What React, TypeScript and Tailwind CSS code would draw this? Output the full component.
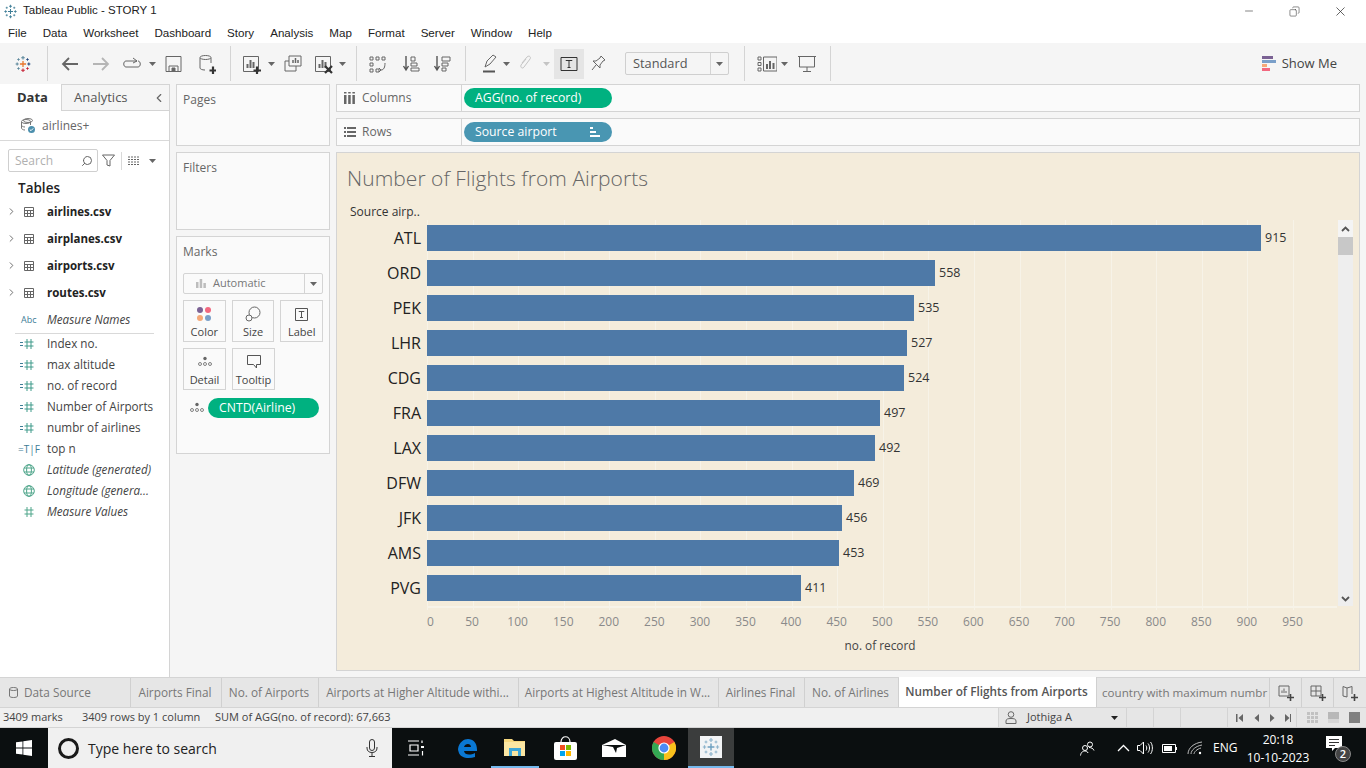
import React from 'react';
import { ChevronRight, Minus, X, Copy, Search } from 'lucide-react';

const bars = [
  ['ATL', 915], ['ORD', 558], ['PEK', 535], ['LHR', 527], ['CDG', 524], ['FRA', 497],
  ['LAX', 492], ['DFW', 469], ['JFK', 456], ['AMS', 453], ['PVG', 411],
] as const;

const ticks = Array.from({ length: 20 }, (_, i) => i * 50);

const tables = ['airlines.csv', 'airplanes.csv', 'airports.csv', 'routes.csv'];

const menus = ['File', 'Data', 'Worksheet', 'Dashboard', 'Story', 'Analysis', 'Map', 'Format', 'Server', 'Window', 'Help'];

const measures = [
  { kind: 'hash', label: 'Index no.' },
  { kind: 'hash', label: 'max altitude' },
  { kind: 'hash', label: 'no. of record' },
  { kind: 'hash', label: 'Number of Airports' },
  { kind: 'hash', label: 'numbr of airlines' },
  { kind: 'tf', label: 'top n' },
  { kind: 'globe', label: 'Latitude (generated)', italic: true },
  { kind: 'globe', label: 'Longitude (genera...', italic: true },
  { kind: 'plain', label: 'Measure Values', italic: true },
];

const tabs = [
  { label: 'Airports Final', w: 'w-[91px]' },
  { label: 'No. of Airports', w: 'w-[97px]' },
  { label: 'Airports at Higher Altitude withi...', w: 'w-[200px]' },
  { label: 'Airports at Highest Altitude in W...', w: 'w-[200px]' },
  { label: 'Airlines Final', w: 'w-[86px]' },
  { label: 'No. of Airlines', w: 'w-[94px]' },
];

// the Tableau mark: crosses of different sizes
const Cross = ({ x, y, r, c, w = 1.2 }: { x: number; y: number; r: number; c: string; w?: number }) => (
  <path d={`M${x - r} ${y}H${x + r}M${x} ${y - r}V${y + r}`} stroke={c} strokeWidth={w} fill="none" />
);

const TableauMark = ({ size, colors }: { size: number; colors: string[] }) => (
  <svg width={size} height={size} viewBox="0 0 20 20" className="shrink-0">
    <Cross x={10} y={10} r={3.4} c={colors[0]} w={1.4} />
    <Cross x={10} y={3} r={2} c={colors[1]} />
    <Cross x={10} y={17} r={2} c={colors[2]} />
    <Cross x={3.5} y={10} r={1.7} c={colors[3]} />
    <Cross x={16.5} y={10} r={1.7} c={colors[4]} />
    <Cross x={5} y={5} r={1.4} c={colors[1]} w={1} />
    <Cross x={15} y={5} r={1.4} c={colors[4]} w={1} />
    <Cross x={5} y={15} r={1.4} c={colors[3]} w={1} />
    <Cross x={15} y={15} r={1.4} c={colors[2]} w={1} />
  </svg>
);

const Caret = ({ className = '', color = '#666' }: { className?: string; color?: string }) => (
  <svg width="7" height="4" viewBox="0 0 7 4" className={`shrink-0 ${className}`}>
    <path d="M0 0H7L3.5 4Z" fill={color} />
  </svg>
);

const Sep = ({ className = '' }: { className?: string }) => <div className={`w-px h-[35px] bg-[#d4d4d4] shrink-0 ${className}`} />;

const Ico = ({ w = 20, h = 20, className = '', children }: { w?: number; h?: number; className?: string; children: React.ReactNode }) => (
  <svg width={w} height={h} viewBox={`0 0 ${w} ${h}`} fill="none" stroke="#666" strokeWidth="1" className={`shrink-0 ${className}`}>
    {children}
  </svg>
);

const BarsGlyph = () => <path d="M5.5 14V10M8.5 14V6M11.5 14V8" strokeWidth="2" />;
const PlusGlyph = () => <path d="M15 12.5V20M11.5 16.5H19" stroke="#333" strokeWidth="2.2" />;

const Toolbar = () => (
  <div className="h-[41px] bg-[#f5f5f5] flex items-center shrink-0">
    <div className="ml-[14px]"><TableauMark size={18} colors={['#e8762c', '#5b879b', '#c72035', '#5b879b', '#1f457e']} /></div>
    <Sep className="ml-[15px]" />
    <Ico w={18} className="ml-[13px]"><path d="M17 10H2M8 4L2 10L8 16" stroke="#666" strokeWidth="1.8" /></Ico>
    <Ico w={18} className="ml-[13px]"><path d="M1 10H16M10 4L16 10L10 16" stroke="#b5b5b5" strokeWidth="1.8" /></Ico>
    <Ico w={20} className="ml-[12px]"><path d="M15 7H4C1 7 1 13 4 13H16C19 13 19 7 16 7M11 4L15 7L11 9" /></Ico>
    <Caret className="ml-[7px]" />
    <Ico w={17} className="ml-[9px]"><path d="M1 2.5H16V17.5H1Z" /><path d="M4 17V12H13V17" /><path d="M7 14H10V17H7Z" fill="#666" /></Ico>
    <Ico w={18} className="ml-[16px]"><ellipse cx="7.5" cy="3.5" rx="5.5" ry="2" /><path d="M2 4V14C2 15 4 16 7 16M13 4V9" /><PlusGlyph /></Ico>
    <Sep className="ml-[14px]" />
    <Ico w={20} className="ml-[11px]"><path d="M1.5 2.5H16.5V17.5H1.5Z" /><BarsGlyph /><PlusGlyph /></Ico>
    <Caret className="ml-[6px]" />
    <Ico w={18} className="ml-[9px]"><path d="M5 2H17V12H5Z" /><path d="M1 7H5M1 7V17H12V12" /><path d="M9 9V6M11.5 9V4M14 9V6" strokeWidth="1.5" /></Ico>
    <Ico w={20} className="ml-[12px]"><path d="M1.5 2.5H16.5V17.5H1.5Z" /><BarsGlyph /><path d="M11 12L18 19M18 12L11 19" stroke="#333" strokeWidth="2.2" /></Ico>
    <Caret className="ml-[5px]" />
    <Sep className="ml-[10px]" />
    <Ico w={18} className="ml-[12px]"><path d="M1 3H4V6H1ZM7 3H10V6H7ZM13 3H16V6H13ZM1 9H4V12H1ZM1 15H4V18H1ZM7 15H10V18H7Z" /><path d="M16 9C16 13 15 16 12 16M10 14L12 16L10 18" /></Ico>
    <Ico w={18} className="ml-[15px]"><path d="M4 2V15M1.5 12L4 16L6.5 12" stroke="#555" strokeWidth="1.4" /><path d="M9 3H13V7H9ZM9 9H15V12H9ZM9 14H17V17H9Z" /></Ico>
    <Ico w={18} className="ml-[13px]"><path d="M4 2V15M1.5 12L4 16L6.5 12" stroke="#555" strokeWidth="1.4" /><path d="M9 3H17V7H9ZM9 9H15V12H9ZM9 14H13V17H9Z" /></Ico>
    <Sep className="ml-[14px]" />
    <Ico w={16} className="ml-[16px]"><path d="M3 13L5 7L11 1L14 3L8 10L3 13Z" fill="none" /><path d="M1 17.5H13" stroke="#555" strokeWidth="2" /></Ico>
    <Caret className="ml-[5px]" />
    <Ico w={14} className="ml-[8px]"><path d="M4 9L9 3C11 1 13.5 3 12 5L6 13C5 15 2 14 3 11L8 5" stroke="#c4c4c4" /></Ico>
    <Caret className="ml-[11px]" color="#c4c4c4" />
    <div className="ml-[4px] w-[30px] h-[30px] bg-[#e5e5e5] flex items-center justify-center shrink-0">
      <Ico w={18} h={16}><path d="M1 1.5H17V14.5H1Z" stroke="#333" /><path d="M6 5V4.5H12V5M9 4.5V11.5M7.5 11.5H10.5" stroke="#333" /></Ico>
    </div>
    <Ico w={15} className="ml-[7px]"><path d="M10 2L14 6L12 7L9 11L9 14L2 7L5 7L9 4Z" /><path d="M5 11L1 16" /></Ico>
    <div className="ml-[19px] w-[104px] h-[23px] border border-[#cfcfcf] rounded-[2px] flex items-center shrink-0">
      <span className="flex-1 pl-[7px] text-[12.8px] text-[#555] leading-none">Standard</span>
      <div className="w-[18px] h-full border-l border-[#d4d4d4] flex items-center justify-center"><Caret /></div>
    </div>
    <Sep className="ml-[15px]" />
    <Ico w={20} className="ml-[12px]"><path d="M1 3H4V6H1ZM1 8.5H4V11.5H1ZM1 14H4V17H1ZM6.5 3H20V17H6.5Z" /><path d="M10 15V10M13 15V7M16.5 15V9" strokeWidth="2" /></Ico>
    <Caret className="ml-[4px]" />
    <Ico w={18} className="ml-[10px]"><path d="M0 2.5H18M1.5 3V13H16.5V3M9 13V17M5 17.5H13" /></Ico>
    <Sep className="ml-[14px]" />
    <div className="ml-auto mr-[29px] flex items-center">
      <div className="flex flex-col gap-[1px] w-[14px] mr-[6px]">
        <div className="h-[3px] w-[11px] bg-[#7b6294]" />
        <div className="h-[3px] w-[14px] bg-[#7a9fc9]" />
        <div className="h-[3px] w-[5px] bg-[#f5a878]" />
        <div className="h-[3px] w-[8px] bg-[#f2687f]" />
      </div>
      <span className="text-[13px] text-[#444]">Show Me</span>
    </div>
  </div>
);

const HashIcon = ({ kind }: { kind: string }) => {
  if (kind === 'tf') return <span className="w-[18px] text-[10px] leading-none text-[#3d7d96] -ml-[1px]">=T|F</span>;
  if (kind === 'globe') {
    return (
      <svg width="12" height="12" viewBox="0 0 12 12" fill="none" stroke="#4ea58a" strokeWidth="1" className="ml-[4px] mr-[2px]">
        <circle cx="6" cy="6" r="5.3" />
        <ellipse cx="6" cy="6" rx="2.4" ry="5.3" />
        <path d="M1 4H11M1 8H11" />
      </svg>
    );
  }
  const c = kind === 'plain' ? '#4ea58a' : '#3e9a8a';
  return (
    <svg width="18" height="12" viewBox="0 0 18 12" fill="none" strokeWidth="1" className="shrink-0">
      {kind === 'hash' && <path d="M1 4.5H4M1 7.5H4" stroke="#3d7d96" />}
      <path d="M8 1V11M12 1V11M5.5 4H14.5M5.5 8H14.5" stroke={c} />
    </svg>
  );
};

const DataPane = () => (
  <div className="w-[170px] bg-white border-r border-[#d4d4d4] flex flex-col shrink-0">
    <div className="h-[27px] flex shrink-0">
      <div className="w-[61px] h-full flex items-center justify-center pl-[4px] text-[13px] font-bold text-[#333]">Data</div>
      <div className="flex-1 bg-[#f5f5f5] border-l border-b border-t border-[#d4d4d4] flex items-center relative">
        <span className="ml-[12px] text-[13px] text-[#555]">Analytics</span>
        <ChevronRight size={14} className="absolute right-[3px] rotate-180 text-[#666]" />
      </div>
    </div>
    <div className="h-[30px] flex items-center border-b border-[#d9d9d9] shrink-0">
      <svg width="16" height="16" viewBox="0 0 16 16" fill="none" stroke="#777" strokeWidth="1" className="ml-[20px]">
        <ellipse cx="6" cy="3.5" rx="4.5" ry="2" />
        <ellipse cx="8" cy="2.5" rx="4.5" ry="2" />
        <path d="M1.5 4V10C1.5 11 3 12 5 12M1.5 7C1.5 8 3 9 5 9M10.5 4V7" />
        <circle cx="11.5" cy="11.5" r="3.5" fill="#4b8fad" stroke="none" />
        <path d="M9.8 11.5L11 12.7L13.2 10.4" stroke="#fff" />
      </svg>
      <span className="ml-[6px] text-[12px] text-[#666]">airlines+</span>
    </div>
    <div className="flex items-center mt-[8px] ml-[8px] shrink-0">
      <div className="w-[90px] h-[23px] border border-[#cfcfcf] rounded-[2px] flex items-center justify-between pl-[6px] pr-[4px]">
        <span className="text-[12px] text-[#b0b0b0]">Search</span>
        <Search size={12} className="text-[#666] -scale-x-100" />
      </div>
      <svg width="13" height="13" viewBox="0 0 13 13" fill="none" stroke="#666" className="ml-[4px]"><path d="M0.5 1H12.5L8 6.5V12L5 11V6.5Z" /></svg>
      <div className="w-px h-[18px] bg-[#d9d9d9] ml-[6px]" />
      <svg width="12" height="10" viewBox="0 0 12 10" stroke="#666" strokeDasharray="2 1" className="ml-[6px]"><path d="M0 1H12M0 3.5H12M0 6H12M0 8.5H12" /></svg>
      <Caret className="ml-[9px]" />
    </div>
    <div className="mt-[6px] ml-[18px] text-[13.5px] font-semibold text-[#222] leading-[20px]">Tables</div>
    <div className="flex flex-col">
      {tables.map((t) => (
        <div key={t} className="h-[27px] flex items-center">
          <ChevronRight size={11} strokeWidth={2} className="ml-[6px] text-[#666]" />
          <svg width="10" height="10" viewBox="0 0 10 10" fill="none" stroke="#666" className="ml-[7px]"><path d="M0.5 0.5H9.5V9.5H0.5ZM0.5 3.5H9.5M0.5 6.5H9.5M3.5 3.5V9.5M6.5 3.5V9.5" /></svg>
          <span className="ml-[13px] text-[11.5px] font-bold text-[#222]">{t}</span>
        </div>
      ))}
    </div>
    <div className="h-[28px] flex items-center mx-[15px] border-b border-[#d9d9d9]">
      <span className="w-[32px] pl-[6px] text-[9px] text-[#3d7d96]">Abc</span>
      <span className="italic text-[11.7px] text-[#444]">Measure Names</span>
    </div>
    <div className="flex flex-col -mt-[1px]">
      {measures.map((m) => (
        <div key={m.label} className="h-[21px] flex items-center pl-[19px]">
          <div className="w-[28px] flex items-center"><HashIcon kind={m.kind} /></div>
          <span className={`text-[11.7px] text-[#444] whitespace-nowrap ${m.italic ? 'italic' : ''}`}>{m.label}</span>
        </div>
      ))}
    </div>
  </div>
);

const MarkCard = ({ label, children }: { label: string; children: React.ReactNode }) => (
  <div className="w-[43px] h-[42px] border border-[#d4d4d4] flex flex-col items-center justify-end pb-[2px]">
    <div className="h-[20px] flex items-center">{children}</div>
    <span className="text-[11px] leading-[15px] text-[#444]">{label}</span>
  </div>
);

const DetailDots = () => (
  <svg width="14" height="12" viewBox="0 0 14 12" fill="none" stroke="#666" strokeWidth="0.8">
    <circle cx="7" cy="2.5" r="1.7" fill="#666" stroke="none" />
    <circle cx="2" cy="8" r="1.5" />
    <circle cx="7" cy="8" r="1.5" />
    <circle cx="12" cy="8" r="1.5" />
  </svg>
);

const Panel = ({ title, className, children }: { title: string; className: string; children?: React.ReactNode }) => (
  <div className={`border border-[#d4d4d4] bg-[#fafafa] px-[6px] shrink-0 ${className}`}>
    <div className="text-[12px] text-[#666] mt-[7px] leading-[16px]">{title}</div>
    {children}
  </div>
);

const SidePanels = () => (
  <div className="w-[154px] ml-[6px] flex flex-col gap-[6px] shrink-0">
    <Panel title="Pages" className="h-[62px]" />
    <Panel title="Filters" className="h-[78px]" />
    <Panel title="Marks" className="h-[218px]">
      <div className="mt-[13px] h-[21px] border border-[#d4d4d4] rounded-[2px] flex items-center">
        <svg width="10" height="9" viewBox="0 0 10 9" className="ml-[12px]" fill="#bdbdbd"><path d="M0 3H2.5V9H0ZM3.7 0H6.2V9H3.7ZM7.4 4H9.9V9H7.4Z" /></svg>
        <span className="ml-[7px] flex-1 text-[11px] text-[#777]">Automatic</span>
        <div className="w-[18px] h-full border-l border-[#d4d4d4] flex items-center justify-center"><Caret /></div>
      </div>
      <div className="flex gap-[6px] mt-[6px]">
        <MarkCard label="Color">
          <svg width="16" height="16" viewBox="0 0 16 16"><circle cx="4" cy="4" r="3" fill="#7b6294" /><circle cx="12" cy="4" r="3" fill="#f2687f" /><circle cx="4" cy="12" r="3" fill="#f5a878" /><circle cx="12" cy="12" r="3" fill="#7a9fc9" /></svg>
        </MarkCard>
        <MarkCard label="Size">
          <svg width="16" height="16" viewBox="0 0 16 16" fill="none" stroke="#666"><circle cx="9.5" cy="6.5" r="5.5" /><circle cx="4" cy="12" r="3" fill="#fafafa" /></svg>
        </MarkCard>
        <MarkCard label="Label">
          <svg width="13" height="13" viewBox="0 0 13 13" fill="none" stroke="#555"><path d="M0.5 0.5H12.5V12.5H0.5Z" /><path d="M4 4V3.5H9V4M6.5 3.5V9.5M5 9.5H8" /></svg>
        </MarkCard>
      </div>
      <div className="flex gap-[6px] mt-[6px]">
        <MarkCard label="Detail"><DetailDots /></MarkCard>
        <MarkCard label="Tooltip">
          <svg width="14" height="14" viewBox="0 0 14 14" fill="none" stroke="#555"><path d="M0.5 0.5H13.5V9.5H9.5V13L6.5 9.5H0.5Z" /></svg>
        </MarkCard>
      </div>
      <div className="flex items-center mt-[8px] ml-[7px]">
        <DetailDots />
        <div className="ml-[4px] w-[111px] h-[20px] rounded-full bg-[#00b180] text-white text-[12.25px] leading-[20px] pl-[11px]">CNTD(Airline)</div>
      </div>
    </Panel>
  </div>
);

const Shelf = ({ label, icon, children }: { label: string; icon: React.ReactNode; children: React.ReactNode }) => (
  <div className="h-[28px] border border-[#d4d4d4] bg-[#fafafa] flex items-center shrink-0">
    <div className="w-[125px] h-full border-r border-[#d4d4d4] flex items-center">
      <div className="w-[13px] ml-[6px] flex justify-center">{icon}</div>
      <span className="ml-[6px] text-[12px] text-[#666]">{label}</span>
    </div>
    {children}
  </div>
);

const Chart = () => (
  <div className="flex-1 min-h-0 border border-[#d4d4d4] bg-[#f4ecdb] flex flex-col">
    <div className="h-[50px] flex items-end pl-[10px] shrink-0">
      <span className="text-[21px] leading-[26px] mb-[12px] text-[#666] font-light tracking-[0.05px]">Number of Flights from Airports</span>
    </div>
    <div className="h-[17px] pl-[13px] text-[12px] leading-[17px] text-[#333] shrink-0">Source airp..</div>
    <div className="relative mr-[22px] shrink-0">
      <div className="absolute left-[90px] right-0 top-0 bottom-0 flex pointer-events-none">
        {ticks.map((t) => (
          <div key={t} className="w-[45.58px] h-[390px] border-l border-[#f7f3e8] shrink-0" />
        ))}
      </div>
      <div className="relative flex flex-col gap-[9px] pt-[5px] pb-[5px] border-b-2 border-[#f7f3e8] ml-[90px] h-[388px]">
        {bars.map(([code, n]) => (
          <div key={code} className="h-[26px] flex items-center shrink-0">
            <span className="w-[84px] -ml-[90px] mr-[6px] text-right text-[16px] font-medium text-[#222] shrink-0">{code}</span>
            <div className="h-full bg-[#4e79a7]" style={{ width: Math.floor(n * 0.9115) }} />
            <span className="ml-[4px] text-[12.5px] text-[#333]">{n}</span>
          </div>
        ))}
      </div>
      <div className="absolute right-[-16px] top-0 w-[15px] h-[386px] bg-[#eeeeee] flex flex-col items-center">
        <div className="h-[17px] w-full bg-[#f4f4f4] flex items-center justify-center">
          <svg width="9" height="6" viewBox="0 0 9 6" fill="none" stroke="#555" strokeWidth="1.8"><path d="M1 5L4.5 1.5L8 5" /></svg>
        </div>
        <div className="h-[18px] w-full bg-[#c8c8c8]" />
        <div className="flex-1" />
        <div className="h-[14px] flex items-center">
          <svg width="9" height="6" viewBox="0 0 9 6" fill="none" stroke="#555" strokeWidth="1.8"><path d="M1 1L4.5 4.5L8 1" /></svg>
        </div>
      </div>
    </div>
    <div className="flex ml-[66.7px] mt-[5px] shrink-0">
      {ticks.map((t) => (
        <span key={t} className={`w-[45.58px] text-center text-[12px] leading-[18px] text-[#8a8a8a] shrink-0 ${t === 0 ? 'pl-[8px]' : ''}`}>{t}</span>
      ))}
    </div>
    <div className="mt-[6px] ml-[90px] mr-[26px] text-center text-[11.8px] leading-[16px] text-[#444] shrink-0">no. of record</div>
  </div>
);

const TabBar = () => (
  <div className="h-[31px] bg-[#e6e6e6] border-t border-b border-[#d4d4d4] flex items-stretch text-[11.8px] text-[#777] shrink-0">
    <div className="w-[131px] flex items-center pl-[9px] border-r border-[#d0d0d0]">
      <svg width="9" height="11" viewBox="0 0 9 11" fill="none" stroke="#777"><path d="M0.5 2V9C0.5 11 8.5 11 8.5 9V2C8.5 0 0.5 0 0.5 2C0.5 4 8.5 4 8.5 2" /></svg>
      <span className="ml-[6px]">Data Source</span>
    </div>
    {tabs.map((t) => (
      <div key={t.label} className={`${t.w} flex items-center justify-center pr-[2px] border-r border-[#d0d0d0] whitespace-nowrap`}>{t.label}</div>
    ))}
    <div className="w-[198px] bg-white flex items-center justify-center font-semibold text-[#555] border-r border-[#d0d0d0] whitespace-nowrap -mt-px pb-[1px] pr-[2px]">Number of Flights from Airports</div>
    <div className="w-[173px] flex items-center pl-[5px] border-r border-[#d0d0d0] whitespace-nowrap text-[11.6px]">country with maximum numbr</div>
    <div className="w-[32px] flex items-center justify-center border-r border-[#d0d0d0]">
      <Ico w={16} h={16}><path d="M1 1H11V11H1Z" /><path d="M4 8V5.5M6 8V3.5M8 8V6" /><path d="M12.5 9V16M9 12.5H16" stroke="#444" strokeWidth="1.6" /></Ico>
    </div>
    <div className="w-[32px] flex items-center justify-center border-r border-[#d0d0d0]">
      <Ico w={16} h={16}><path d="M1 1H11V11H1ZM6 1V11M1 6H11" /><path d="M12.5 9V16M9 12.5H16" stroke="#444" strokeWidth="1.6" /></Ico>
    </div>
    <div className="flex-1 flex items-center justify-center">
      <Ico w={16} h={16}><path d="M1 1.5L5 3V12L1 11ZM5 3L10 1.5V9" /><path d="M12.5 9V16M9 12.5H16" stroke="#444" strokeWidth="1.6" /></Ico>
    </div>
  </div>
);

const StatusBar = () => (
  <div className="h-[20px] bg-[#f0f0f0] border-b border-[#d4d4d4] flex items-center text-[11px] text-[#444] shrink-0">
    <span className="ml-[3px] w-[79px]">3409 marks</span>
    <span className="w-[133px]">3409 rows by 1 column</span>
    <span>SUM of AGG(no. of record): 67,663</span>
    <div className="ml-auto flex h-full bg-[#e6e6e6]">
      <div className="w-[128px] flex items-center border-l border-[#d4d4d4] pl-[6px] relative">
        <svg width="12" height="13" viewBox="0 0 12 13" fill="none" stroke="#666"><circle cx="6" cy="3.5" r="2.8" /><path d="M1 12.5V10C1 8 3 7.5 6 7.5C9 7.5 11 8 11 10V12.5Z" /></svg>
        <span className="ml-[10px]">Jothiga A</span>
        <Caret className="absolute right-[8px]" color="#222" />
      </div>
      <div className="w-[27px] border-l border-[#d4d4d4]" />
      <div className="w-[27px] border-l border-[#d4d4d4]" />
      <div className="w-[47px] border-l border-[#d4d4d4]" />
      <div className="w-[69px] border-l border-[#d4d4d4] flex items-center pl-[8px]">
        <svg width="55" height="8" viewBox="0 0 55 8" fill="#666">
          <path d="M0 0H1.5V8H0ZM7 0V8L2.5 4ZM23 0V8L18.5 4ZM34 0V8L38.5 4ZM49 0V8L53.5 4ZM54 0H55.5V8H54Z" />
        </svg>
      </div>
      <div className="w-[70px] border-l border-[#d4d4d4] flex items-center gap-[10px] pl-[10px]">
        <div className="w-[11px] h-[11px] grid grid-cols-3 gap-[1px]">
          {Array.from({ length: 9 }, (_, i) => <div key={i} className="bg-[#c2c2c2]" />)}
        </div>
        <div className="w-[11px] h-[11px] bg-[#b8b8b8] border-b-[4px] border-[#d6d6d6]" />
        <div className="w-[11px] h-[11px] bg-[#808080]" />
      </div>
    </div>
  </div>
);

const TaskIcon = ({ className = '', children }: { className?: string; children: React.ReactNode }) => (
  <div className={`w-[48px] h-full flex items-center justify-center shrink-0 ${className}`}>{children}</div>
);

const Taskbar = () => (
  <div className="h-[40px] bg-[#0b0f10] flex items-center text-white shrink-0">
    <div className="w-[48px] h-full flex items-center justify-center">
      <svg width="16" height="16" viewBox="0 0 16 16" fill="#fff"><path d="M0 2.3L6.5 1.4V7.5H0ZM7.3 1.3L16 0V7.5H7.3ZM0 8.4H6.5V14.6L0 13.7ZM7.3 8.4H16V16L7.3 14.7Z" /></svg>
    </div>
    <div className="w-[344px] h-full bg-[#f0f0f0] flex items-center text-[#222]">
      <div className="ml-[10px] w-[21px] h-[21px] rounded-full border-[3px] border-[#1a1a1a]" />
      <span className="ml-[9px] mt-[1px] text-[14px]">Type here to search</span>
      <svg width="12" height="18" viewBox="0 0 12 18" fill="none" stroke="#333" className="ml-auto mr-[14px]"><rect x="3.5" y="0.5" width="5" height="11" rx="2.5" /><path d="M1 8V9C1 12 3 13.5 6 13.5C9 13.5 11 12 11 9V8M6 14V17M3 17.5H9" /></svg>
    </div>
    <TaskIcon>
      <svg width="16" height="16" viewBox="0 0 16 16" fill="none" stroke="#fff" strokeWidth="1.2"><path d="M0 1H11M0 15H11M2 5H10V11H2ZM14 0.5V3" /><path d="M13 6H16V8H13Z" fill="#fff" stroke="none" /><path d="M14.5 11V15.5" /></svg>
    </TaskIcon>
    <TaskIcon className="ml-[3px]">
      <svg width="21" height="21" viewBox="0 0 21 21"><path d="M1 11C2 4 7 1 11 1C16 1 20 5 20 11.5V13H7C7.5 17 13 17.5 18 15V19C12 21 3 20.5 1.5 13.5C1.2 12.5 1 11.8 1 11ZM7 9H14C14 5 8 5 7 9Z" fill="#0a78d4" /></svg>
    </TaskIcon>
    <TaskIcon className="border-b-2 border-[#76b9ed]">
      <svg width="22" height="19" viewBox="0 0 22 19"><path d="M0 1H8L10 3H21V18H0Z" fill="#f6d77e" /><path d="M0 4H21V18H0Z" fill="#fbe6a2" /><path d="M5 10H17V18H14V13H8V18H5Z" fill="#3da6d8" /></svg>
    </TaskIcon>
    <TaskIcon className="ml-[2px]">
      <svg width="23" height="24" viewBox="0 0 23 24"><path d="M7 6C7 -1 16 -1 16 6" fill="none" stroke="#fff" strokeWidth="1.2" /><rect y="6" width="23" height="18" rx="2" fill="#fff" /><path d="M6 9H11V14H6Z" fill="#f25022" /><path d="M12 9H17V14H12Z" fill="#7fba00" /><path d="M6 15H11V20H6Z" fill="#00a4ef" /><path d="M12 15H17V20H12Z" fill="#ffb900" /></svg>
    </TaskIcon>
    <TaskIcon className="ml-[1px]">
      <svg width="24" height="18" viewBox="0 0 24 18"><path d="M0 6L13 0L24 6V18H0Z" fill="#fff" /><path d="M0 6L24 6L15 9L14 14L11 8Z" fill="#0b0f10" /></svg>
    </TaskIcon>
    <TaskIcon className="ml-[2px]">
      <svg width="24" height="24" viewBox="0 0 24 24"><circle cx="12" cy="12" r="12" fill="#e8453c" /><path d="M12 12L22.4 6A12 12 0 0 1 12 24Z" fill="#f8c11c" /><path d="M12 12L12 24A12 12 0 0 1 1.6 6Z" fill="#34a853" /><circle cx="12" cy="12" r="5.6" fill="#fff" /><circle cx="12" cy="12" r="4.4" fill="#4c8bf5" /></svg>
    </TaskIcon>
    <div className="w-[46px] h-full bg-[#3b3d3d] border-b-2 border-[#76b9ed] flex items-center justify-center shrink-0">
      <div className="w-[22px] h-[22px] bg-[#f2f4f6] flex items-center justify-center">
        <TableauMark size={20} colors={['#6c9fc0', '#8db4cc', '#8db4cc', '#8db4cc', '#8db4cc']} />
      </div>
    </div>
    <div className="ml-auto flex items-center h-full">
      <svg width="15" height="15" viewBox="0 0 15 15" fill="none" stroke="#fff"><circle cx="10" cy="3.5" r="2.5" /><circle cx="5" cy="7" r="2.5" /><path d="M0.5 14.5C1 11 3 10 5 10C6.5 10 7.5 10.5 8 12M9 6.5C11 6.5 13.5 7.5 14 9.5" /></svg>
      <svg width="13" height="8" viewBox="0 0 13 8" fill="none" stroke="#fff" strokeWidth="1.3" className="ml-[22px]"><path d="M1 7L6.5 1.5L12 7" /></svg>
      <svg width="17" height="14" viewBox="0 0 17 14" fill="none" stroke="#fff" className="ml-[7px]"><path d="M0.5 4.5H3L6.5 1V13L3 9.5H0.5ZM9 4.5C10 6 10 8 9 9.5M11 2.5C13 5 13 9 11 11.5M13.5 1C16 4 16 10 13.5 13" /></svg>
      <svg width="15" height="9" viewBox="0 0 15 9" fill="none" stroke="#fff" className="ml-[8px]"><path d="M0.5 0.5H13.5V8.5H0.5Z" /><path d="M2 2H10V7H2Z" fill="#fff" stroke="none" /><path d="M14.5 3V6" /></svg>
      <svg width="16" height="14" viewBox="0 0 16 14" fill="none" stroke="#bbb" className="ml-[10px]"><path d="M1 13C1 7 7 2 15 1M4 13C4 9 9 5 15 4M7 13C7 11 10 8 14 7" /><circle cx="13" cy="12" r="1.2" fill="#fff" stroke="none" /></svg>
      <span className="ml-[10px] text-[12px] w-[25px]">ENG</span>
      <div className="ml-[8px] w-[64px] mt-[1px] flex flex-col items-center text-[12px] leading-[18px] whitespace-nowrap">
        <span>20:18</span>
        <span>10-10-2023</span>
      </div>
      <div className="relative ml-[16px] mr-[14px] w-[26px] h-[24px]">
        <svg width="16" height="15" viewBox="0 0 16 15" className="absolute left-0 top-0"><path d="M0 0H16V12H9L6 15V12H0Z" fill="#fff" /><path d="M3 3.5H13M3 6.5H13M3 9.5H9" stroke="#333" /></svg>
        <div className="absolute right-[1px] bottom-[-2px] w-[16px] h-[16px] rounded-full bg-[#444] border border-[#888] text-[11px] leading-[14px] text-center font-semibold">2</div>
      </div>
    </div>
  </div>
);

export default function App() {
  return (
    <div className="w-[1366px] h-[768px] overflow-hidden bg-white flex flex-col font-['Open_Sans',sans-serif]">
      <div className="h-[22px] flex items-center shrink-0">
        <div className="ml-[3px]"><TableauMark size={15} colors={['#3d7d96', '#3d7d96', '#3d7d96', '#3d7d96', '#3d7d96']} /></div>
        <span className="ml-[5px] text-[11.5px] text-[#222] font-['Liberation_Sans',sans-serif]">Tableau Public - STORY 1</span>
        <div className="ml-auto flex items-center text-[#333]">
          <Minus size={12} strokeWidth={1.2} />
          <Copy size={11} strokeWidth={1.2} className="ml-[34px] -scale-x-100" />
          <X size={15} strokeWidth={1.2} className="ml-[33px] mr-[18px]" />
        </div>
      </div>
      <div className="h-[21px] flex items-center gap-[16px] pl-[8px] text-[11.6px] text-[#222] font-['Liberation_Sans',sans-serif] shrink-0">
        {menus.map((m) => <span key={m}>{m}</span>)}
      </div>
      <Toolbar />
      <div className="flex-1 min-h-0 flex bg-[#f5f5f5]">
        <DataPane />
        <SidePanels />
        <div className="flex-1 min-w-0 ml-[6px] mr-[6px] mb-[6px] flex flex-col gap-[6px]">
          <Shelf
            label="Columns"
            icon={<svg width="11" height="12" viewBox="0 0 11 12" fill="#666"><path d="M0 3H2.5V12H0ZM4.2 3H6.7V12H4.2ZM8.4 3H10.9V12H8.4ZM0 0H2.5V1.5H0ZM4.2 0H6.7V1.5H4.2ZM8.4 0H10.9V1.5H8.4Z" /></svg>}
          >
            <div className="ml-[2px] w-[148px] h-[20px] rounded-full bg-[#00b180] text-white text-[12.25px] leading-[20px] pl-[11px]">AGG(no. of record)</div>
          </Shelf>
          <Shelf
            label="Rows"
            icon={<svg width="12" height="10" viewBox="0 0 12 10" fill="#666"><path d="M0 0H2V2H0ZM3 0H12V2H3ZM0 4H2V6H0ZM3 4H12V6H3ZM0 8H2V10H0ZM3 8H12V10H3Z" /></svg>}
          >
            <div className="ml-[2px] w-[148px] h-[20px] rounded-full bg-[#4996b2] text-white text-[12.25px] leading-[20px] pl-[11px] flex items-center justify-between pr-[12px]">
              <span>Source airport</span>
              <svg width="10" height="10" viewBox="0 0 10 10" fill="#fff"><path d="M0 0H3V2H0ZM0 4H6V6H0ZM0 8H10V10H0Z" /></svg>
            </div>
          </Shelf>
          <Chart />
        </div>
      </div>
      <TabBar />
      <StatusBar />
      <Taskbar />
    </div>
  );
}
